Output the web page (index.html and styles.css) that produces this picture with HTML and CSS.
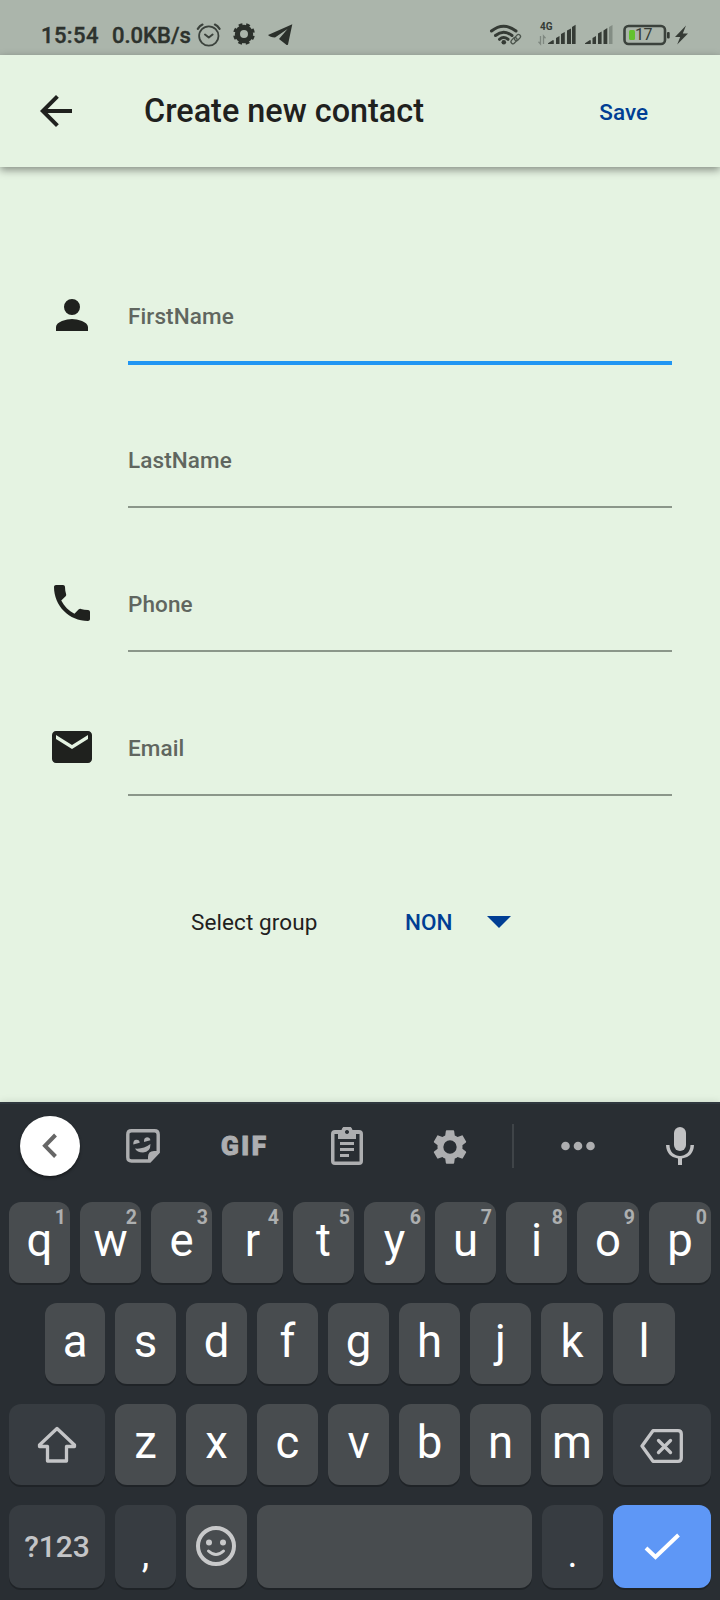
FILE: index.html
```html
<!DOCTYPE html>
<html lang="en">
<head>
<meta charset="utf-8">
<title>Create new contact</title>
<link rel="stylesheet" href="styles.css">
</head>
<body>
<div class="screen">
  <div class="status">
    <span class="clock">15:54</span>
    <span class="speed">0.0KB/s</span>
    <svg class="status-left" width="100" height="26" viewBox="195 22 100 26">
      <g fill="none" stroke="#3b423c" stroke-width="1.800" stroke-linecap="round" stroke-linejoin="round">
        <circle cx="208.800" cy="36" r="9.700"/>
        <path d="M205 34.500l3.800 3 3.800-3" stroke-width="2"/>
        <path d="M197.800 28.800q2-3 4.700-4.200M219.600 28.800q-2-3-4.700-4.200" stroke-width="2.200"/>
      </g>
      <g fill="#2b302b">
        <circle cx="244" cy="34" r="6.600" fill="none" stroke="#2b302b" stroke-width="5.200"/>
        <circle cx="244" cy="34" r="9.600" fill="none" stroke="#2b302b" stroke-width="2.600" stroke-dasharray="3.800 3.740" stroke-dashoffset="-1.900"/>
        <path d="M268 35l24.300-10.700-4.300 20.200q-1 1-2 0l-7-5.500 8.500-10-12.500 8.500q-5-.5-7-2.500z"/>
      </g>
    </svg>
    <svg class="status-right" width="202" height="26" viewBox="488 22 202 26">
      <g fill="none" stroke="#353b35" stroke-width="3" stroke-linecap="round">
        <path d="M491.500 31q12-9.500 24.500 0M495.500 35.500q8-6.500 16.500 0M499.500 39.300q4-3.500 8.500 0"/>
      </g>
      <circle cx="503.800" cy="42.300" r="2.300" fill="#353b35"/>
      <g fill="none" stroke="#4c554d" stroke-width="1.300">
        <rect x="510.500" y="38.600" width="7" height="4" rx="2" transform="rotate(-48 514 40.600)"/>
        <rect x="514" y="35.600" width="7" height="4" rx="2" transform="rotate(-48 517.500 37.600)"/>
      </g>
      <text x="540" y="30" class="net" textLength="12.500">4G</text>
      <path d="M540.500 36v8l-2-2.200M543.500 44v-8l2 2.200" fill="none" stroke="#7f8880" stroke-width="1.300"/>
      <g fill="#353b35">
        <path d="M548 44v-.8l5-3.200q.8 0 .8 1v3zM556 44v-6l3.500-2v8zM561 44V34l3.800-2v12zM567 44V30.500l4-2V44zM572 44V27l3.600-2.200V44z"/>
        <path d="M585 44v-.8l5-3.200q.8 0 .8 1v3zM592.500 44v-6l3.500-2v8zM598 44V33.500l3.600-2V44zM603.500 44V30.500l3.800-2.500v16z"/>
        <path d="M609 44V27l3.500-2v19z" fill="#838d84"/>
        <rect x="667" y="32" width="2.700" height="6.500" rx="1"/>
        <path d="M686 25.500l-11 11.500h5.200l-3 7.500L688 33.600h-5.200z"/>
      </g>
      <rect x="624.500" y="26" width="40.500" height="18" rx="4" fill="none" stroke="#3b423c" stroke-width="2.600"/>
      <rect x="629" y="30" width="6" height="10" rx="1.500" fill="#63c12e"/>
      <text x="635" y="40.400" class="charge" textLength="17.500">17</text>
    </svg>
  </div>

  <header class="appbar">
    <svg class="back" viewBox="0 0 24 24"><path d="M20 11H7.830l5.590-5.590L12 4l-8 8 8 8 1.410-1.410L7.830 13H20z"/></svg>
    <h1 class="title">Create new contact</h1>
    <span class="save">Save</span>
  </header>

  <main class="form">
    <div class="field focused">
      <svg class="field-icon" viewBox="0 0 24 24"><path d="M12 12a4 4 0 1 0 0-8 4 4 0 0 0 0 8zm0 2c-2.670 0-8 1.340-8 4v2h16v-2c0-2.660-5.330-4-8-4z"/></svg>
      <div class="input"><span>FirstName</span></div>
    </div>
    <div class="field">
      <span class="field-icon"></span>
      <div class="input"><span>LastName</span></div>
    </div>
    <div class="field">
      <svg class="field-icon" viewBox="0 0 24 24"><path d="M6.620 10.790c1.440 2.830 3.760 5.140 6.590 6.590l2.200-2.200c.27-.27.67-.36 1.020-.24 1.120.37 2.330.57 3.570.57.55 0 1 .45 1 1V20c0 .55-.45 1-1 1-9.390 0-17-7.610-17-17 0-.55.45-1 1-1h3.500c.55 0 1 .45 1 1 0 1.250.2 2.450.57 3.570.11.35.03.74-.25 1.020z"/></svg>
      <div class="input"><span>Phone</span></div>
    </div>
    <div class="field">
      <svg class="field-icon" viewBox="0 0 24 24"><path d="M20 4H4c-1.100 0-1.990.9-1.990 2L2 18c0 1.100.9 2 2 2h16c1.100 0 2-.9 2-2V6c0-1.100-.9-2-2-2zm0 4l-8 5-8-5V6l8 5 8-5z"/></svg>
      <div class="input"><span>Email</span></div>
    </div>
    <div class="group">
      <span class="group-label">Select group</span>
      <span class="group-value">NON</span>
      <svg class="caret" viewBox="0 0 24 12"><path d="M0 0h24L12 12z"/></svg>
    </div>
  </main>

  <section class="keyboard">
    <div class="tools">
      <span class="collapse"><svg width="60" height="60" viewBox="0 0 60 60"><path d="M35.500 19L25 29.800 35.500 40.500" fill="none" stroke="#666" stroke-width="4"/></svg></span>
      <svg class="sticker" width="34" height="34" viewBox="0 0 34 34">
        <path d="M5.500 1.800h23q3.700 0 3.700 3.700V23l-8.500 9H5.500q-3.700 0-3.700-3.700V5.500q0-3.700 3.700-3.700z" fill="none" stroke="#adaeb0" stroke-width="3.400"/>
        <path d="M22 33v-5q0-6 6-6h5v2l-9 9zM9 19.500q8 1 15.500-4.500 0 8-7.500 8.500-6 0-8-4zM7.300 15.500q-.3-4.500 3-4.700t3.400 3zM18 13q-.3-4.500 3-4.800 3 0 3.400 3z" fill="#adaeb0"/>
      </svg>
      <span class="gif">GIF</span>
      <svg class="clipboard" width="32" height="38" viewBox="0 0 32 38">
        <path fill-rule="evenodd" d="M4 3h6.500a5.700 5.700 0 0 1 11 0H28q4 0 4 4v27q0 4-4 4H4q-4 0-4-4V7q0-4 4-4zM3.500 7v27.500h25V7H25v5H7V7zM16 3a2 2 0 1 0 .01 0z"/>
        <path d="M9 15h14v3H9zM9 21h14v3H9zM9 27h9v3H9z"/>
      </svg>
      <svg class="settings" width="40" height="40" viewBox="0 0 24 24"><path d="M19.430 12.980c.04-.32.07-.64.07-.98s-.03-.66-.07-.98l2.110-1.650c.19-.15.24-.42.12-.64l-2-3.460c-.12-.22-.39-.3-.61-.22l-2.490 1c-.52-.4-1.080-.73-1.690-.98l-.38-2.650C14.460 2.180 14.250 2 14 2h-4c-.25 0-.46.18-.49.42l-.38 2.650c-.61.25-1.170.59-1.690.98l-2.490-1c-.23-.09-.49 0-.61.22l-2 3.460c-.13.22-.07.49.12.64l2.110 1.650c-.04.32-.07.65-.07.98s.03.66.07.98l-2.110 1.650c-.19.15-.24.42-.12.64l2 3.460c.12.22.39.3.61.22l2.490-1c.52.4 1.080.73 1.690.98l.38 2.650c.03.24.24.42.49.42h4c.25 0 .46-.18.49-.42l.38-2.650c.61-.25 1.170-.59 1.690-.98l2.490 1c.23.09.49 0 .61-.22l2-3.460c.12-.22.07-.49-.12-.64zM12 16a4 4 0 1 1 0-8 4 4 0 0 1 0 8z"/></svg>
      <span class="divider"></span>
      <svg class="more" width="34" height="10" viewBox="0 0 34 10"><circle cx="4.500" cy="5" r="4.300"/><circle cx="17" cy="5" r="4.300"/><circle cx="29.500" cy="5" r="4.300"/></svg>
      <svg class="mic" width="28" height="38" viewBox="0 0 28 38"><rect x="8" y="0" width="12" height="24" rx="6"/><path d="M0 18h3.500c0 14.500 21 14.500 21 0H28q-.5 11.500-12 13.500V38h-4v-6.500Q.5 29.500 0 18z"/></svg>
    </div>
    <div class="row letters">
      <span class="key">q<sup>1</sup></span><span class="key">w<sup>2</sup></span><span class="key">e<sup>3</sup></span><span class="key">r<sup>4</sup></span><span class="key">t<sup>5</sup></span><span class="key">y<sup>6</sup></span><span class="key">u<sup>7</sup></span><span class="key">i<sup>8</sup></span><span class="key">o<sup>9</sup></span><span class="key">p<sup>0</sup></span>
    </div>
    <div class="row letters inset">
      <span class="key">a</span><span class="key">s</span><span class="key">d</span><span class="key">f</span><span class="key">g</span><span class="key">h</span><span class="key">j</span><span class="key">k</span><span class="key">l</span>
    </div>
    <div class="row">
      <span class="key dark wide-left"><svg width="40" height="38" viewBox="0 0 40 38"><path d="M20 2.500L37.500 19v1.500h-8V35H10.500V20.500h-8V19z" fill="none" stroke="#c4c5c7" stroke-width="3.300" stroke-linejoin="round"/></svg></span>
      <span class="key">z</span><span class="key">x</span><span class="key">c</span><span class="key">v</span><span class="key">b</span><span class="key">n</span><span class="key grow">m</span>
      <span class="key dark wide-right"><svg width="44" height="34" viewBox="0 0 44 34"><path d="M13 1.700h25q3.300 0 3.300 3.300v24q0 3.300-3.300 3.300H13L2 17z" fill="none" stroke="#c4c5c7" stroke-width="3.300" stroke-linejoin="round"/><path d="M18.500 11.500l12 12M30.500 11.500l-12 12" fill="none" stroke="#c4c5c7" stroke-width="3.300" stroke-linecap="round"/></svg></span>
    </div>
    <div class="row last-row">
      <span class="key dark wide-left symbols">?123</span>
      <span class="key dark punct">,</span>
      <span class="key emoji"><svg width="40" height="40" viewBox="0 0 40 40"><circle cx="20" cy="20" r="18" fill="none" stroke="#c8c9ca" stroke-width="4"/><circle cx="13" cy="16.500" r="3" fill="#c8c9ca"/><circle cx="27" cy="16.500" r="3" fill="#c8c9ca"/><path d="M12.500 25q7.500 7 15 0" fill="none" stroke="#c8c9ca" stroke-width="3" stroke-linecap="round"/></svg></span>
      <span class="key grow"></span>
      <span class="key dark punct">.</span>
      <span class="key enter wide-right"><svg width="36" height="28" viewBox="0 0 36 28"><path d="M2 15l9.500 9L34.500 2" fill="none" stroke="#fff" stroke-width="4"/></svg></span>
    </div>
  </section>
</div>
</body>
</html>
```

FILE: styles.css
```css
* { box-sizing: border-box; }
body { margin: 0; font-family: Roboto, sans-serif; }
svg { display: block; flex: none; }

.screen {
  width: 720px;
  height: 1600px;
  display: flex;
  flex-direction: column;
  overflow: hidden;
  background: #e5f3e2;
  color: #1f211e;
}

/* Status bar */
.status {
  height: 55px;
  flex: none;
  display: flex;
  align-items: center;
  padding: 15px 30px 0 41px;
  background: #abb5ab;
  color: #2d322d;
  font-size: 22px;
  font-weight: 500;
  white-space: nowrap;
}
.clock { width: 71px; letter-spacing: 0.4px; }
.speed { width: 83px; letter-spacing: 0; }
.clock, .speed { -webkit-text-stroke: .4px #2d322d; }
.status-right { margin-left: auto; }
.net { font-size: 10px; font-weight: 700; fill: #353b35; }
.charge { font-size: 16px; font-weight: 400; fill: #353b35; }

/* App bar */
.appbar {
  height: 112px;
  flex: none;
  display: flex;
  align-items: center;
  padding: 0 72px 0 32px;
  background: #e5f3e2;
  box-shadow: 0 3px 8px rgba(0, 0, 0, .42);
  z-index: 1;
}
.back { width: 48px; height: 48px; fill: #1f211e; }
.title { margin: 0 0 0 64px; font-size: 32.400px; font-weight: 500; white-space: nowrap; }
.save { margin-left: auto; padding-top: 2px; font-size: 22.500px; font-weight: 500; color: #003e94; }

/* Contact form */
.form {
  flex: 1;
  display: flex;
  flex-direction: column;
  gap: 70px;
  padding: 124px 48px 0;
}
.field { display: flex; height: 74px; }
.field-icon { width: 48px; height: 48px; margin-right: 32px; fill: #1f211e; }
.input {
  flex: 1;
  height: 73px;
  padding-top: 12px;
  border-bottom: 2px solid #8b968a;
  color: #60665f;
  font-size: 22.500px;
  font-weight: 500;
  line-height: 26px;
  letter-spacing: .1px;
}
.focused .input { height: 74px; border-bottom: 4px solid #2196f3; }
.group {
  display: flex;
  align-items: center;
  height: 32px;
  margin: 39px 0 0 143px;
  font-size: 22.500px;
}
.group-label { width: 214px; letter-spacing: .1px; }
.group-value { width: 82px; font-weight: 500; color: #003e94; }
.caret { width: 24px; height: 12px; fill: #003e94; }

/* Keyboard */
.keyboard {
  height: 498px;
  flex: none;
  display: flex;
  flex-direction: column;
  gap: 20px;
  padding: 0 9px;
  background: #292e33;
  border-top: 2px solid #30383f;
  box-shadow: 0 0 8px rgba(0, 0, 0, .12);
}
.tools {
  height: 78px;
  display: flex;
  align-items: center;
  padding: 6px 0 0 11px;
  fill: #adaeb0;
}
.collapse { width: 60px; height: 60px; border-radius: 50%; background: #fff; box-shadow: 0 2px 3px rgba(0, 0, 0, .4); }
.sticker { margin-left: 46px; }
.gif {
  width: 110px;
  padding-left: 61px;
  color: #adaeb0;
  font-size: 26px;
  font-weight: 900;
  line-height: 30px;
  letter-spacing: 2.600px;
  -webkit-text-stroke: 1px #adaeb0;
}
.clipboard { margin-left: 61px; }
.settings { margin: 2px 0 0 67px; }
.divider { width: 2px; height: 44px; margin-left: 42px; background: #3f4448; }
.more { margin-left: 47px; }
.mic { margin-left: 71px; fill: #c0c1c3; }

.row { display: flex; gap: 10px; height: 81px; flex: none; }
.inset { padding: 0 36px; }
.last-row { height: 83px; }
.key {
  position: relative;
  flex: 0 0 61px;
  display: flex;
  align-items: center;
  justify-content: center;
  padding-bottom: 4px;
  border-radius: 12px;
  background: #484c4f;
  box-shadow: 0 2px 0 #1f2327;
  color: #fff;
  font-size: 45.500px;
  line-height: 40px;
}
.letters .key:nth-last-child(-n+2) { flex-basis: 62px; }
.inset .key:first-child { flex-basis: 60px; }
.row .grow { flex: 1 1 0; }
.key sup {
  position: absolute;
  top: 6px;
  right: 4px;
  color: #adafb0;
  font-size: 19.500px;
  font-weight: 700;
  line-height: 20px;
}
.dark { background: #373c41; }
.wide-left { flex: 0 0 96px; padding: 0; }
.wide-right { flex: 0 0 98px; padding: 2px 0 0; }
.symbols { color: #c4c5c7; font-size: 30px; font-weight: 500; }
.punct { padding: 14px 0 0; font-size: 38px; }
.emoji { padding: 0 1px 2px 0; }
.enter { background: #5e97f6; padding: 0; }
```
